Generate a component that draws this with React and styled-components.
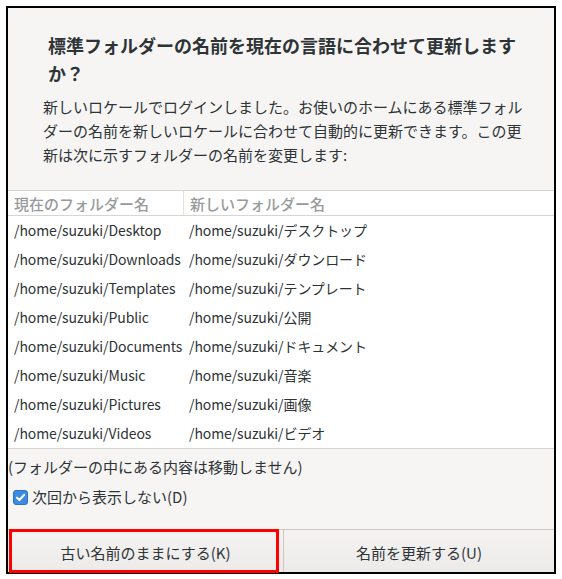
import React from "react";
import styled, { createGlobalStyle } from "styled-components";

const Global = createGlobalStyle`
  html, body { margin: 0; padding: 0; background: #ffffff; }
  body { font-family: "Noto Sans CJK JP", "Noto Sans", sans-serif; }
`;

const Page = styled.div`
  padding: 6px;
  width: 562px;
  height: 579px;
  box-sizing: border-box;
`;

const Window = styled.div`
  width: 550px;
  height: 568px;
  box-sizing: border-box;
  border: 2px solid #000;
  background: #f6f5f4;
  display: flex;
  flex-direction: column;
  color: #2e3436;
`;

const Title = styled.h1`
  margin: 23px 0 0 40px;
  width: 482px;
  font-size: 18px;
  line-height: 28px;
  font-weight: 700;
  color: #2e3436;
`;

const Body = styled.p`
  margin: 8px 0 0 35px;
  width: 488px;
  font-size: 15px;
  line-height: 24px;
  color: #2e3436;
`;

const Table = styled.div`
  margin-top: 23px;
  background: #fff;
  border-top: 1px solid #d8d4d0;
  border-bottom: 1px solid #d8d4d0;
`;

const Row = styled.div`
  display: grid;
  grid-template-columns: 175px 1fr;
  height: ${(p) => (p.$header ? "24px" : "29px")};
  align-items: center;
  border-bottom: ${(p) => (p.$header ? "1px solid #d8d4d0" : "none")};
  font-size: ${(p) => (p.$header ? "15px" : "14px")};
  letter-spacing: ${(p) => (p.$header ? "0" : "-0.1px")};
  color: ${(p) => (p.$header ? "#979a9a" : "#2e3436")};
  font-weight: ${(p) => (p.$header ? 500 : 400)};
`;

const Cell = styled.div`
  padding-left: 6px;
  padding-bottom: ${(p) => (p.$header ? "0" : "1px")};
  box-sizing: border-box;
  height: 100%;
  display: flex;
  align-items: center;
  white-space: nowrap;
  border-left: ${(p) => (p.$divider ? "1px solid #e4e1de" : "none")};
`;

const Note = styled.div`
  margin-top: 6px;
  font-size: 15px;
  line-height: 24px;
  color: #2e3436;
`;

const CheckRow = styled.label`
  display: flex;
  align-items: center;
  gap: 4px;
  margin: 6px 0 0 5px;
  font-size: 15px;
  line-height: 24px;
  color: #2e3436;
`;

const Box = styled.span`
  width: 15px;
  height: 15px;
  border-radius: 3px;
  background: #3d8be0;
  border: 1px solid #2a76c6;
  display: inline-flex;
  align-items: center;
  justify-content: center;
  box-sizing: border-box;
`;

const Spacer = styled.div`
  flex: 1;
`;

const ButtonBar = styled.div`
  display: grid;
  grid-template-columns: 275px 1fr;
  border-top: 1px solid #cdc7c2;
  height: 42px;
`;

const Button = styled.div`
  position: relative;
  display: flex;
  align-items: center;
  justify-content: center;
  padding-top: 2px;
  font-size: 15px;
  color: #2e3436;
  background: linear-gradient(#f4f3f2, #edebe9);
  border-left: ${(p) => (p.$divider ? "1px solid #cdc7c2" : "none")};
`;

const Highlight = styled.span`
  position: absolute;
  left: 1px;
  top: -1px;
  right: 4px;
  bottom: -1px;
  border: 3px solid #ff0000;
  pointer-events: none;
`;

const rows = [
  ["/home/suzuki/Desktop", "/home/suzuki/デスクトップ"],
  ["/home/suzuki/Downloads", "/home/suzuki/ダウンロード"],
  ["/home/suzuki/Templates", "/home/suzuki/テンプレート"],
  ["/home/suzuki/Public", "/home/suzuki/公開"],
  ["/home/suzuki/Documents", "/home/suzuki/ドキュメント"],
  ["/home/suzuki/Music", "/home/suzuki/音楽"],
  ["/home/suzuki/Pictures", "/home/suzuki/画像"],
  ["/home/suzuki/Videos", "/home/suzuki/ビデオ"],
];

export default function App() {
  return (
    <Page>
      <Global />
      <Window>
        <Title>標準フォルダーの名前を現在の言語に合わせて更新しますか？</Title>
        <Body>
          新しいロケールでログインしました。お使いのホームにある標準フォルダーの名前を新しいロケールに合わせて自動的に更新できます。この更新は次に示すフォルダーの名前を変更します:
        </Body>
        <Table>
          <Row $header>
            <Cell $header>現在のフォルダー名</Cell>
            <Cell $header $divider>新しいフォルダー名</Cell>
          </Row>
          {rows.map(([a, b]) => (
            <Row key={a}>
              <Cell>{a}</Cell>
              <Cell>{b}</Cell>
            </Row>
          ))}
        </Table>
        <Note>(フォルダーの中にある内容は移動しません)</Note>
        <CheckRow>
          <Box>
            <svg width="11" height="11" viewBox="0 0 10 10">
              <path d="M1.8 5.2 L4 7.3 L8.3 2.6" fill="none" stroke="#fff" strokeWidth="1.9" strokeLinecap="round" strokeLinejoin="round" />
            </svg>
          </Box>
          次回から表示しない(D)
        </CheckRow>
        <Spacer />
        <ButtonBar>
          <Button>
            古い名前のままにする(K)
            <Highlight />
          </Button>
          <Button $divider>名前を更新する(U)</Button>
        </ButtonBar>
      </Window>
    </Page>
  );
}
